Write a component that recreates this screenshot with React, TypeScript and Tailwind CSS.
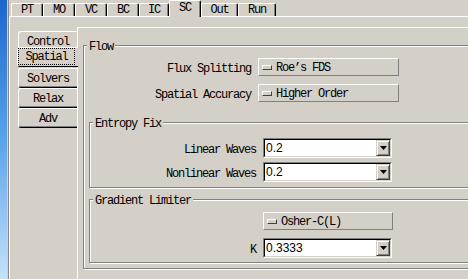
// Solver settings dialog: "SC" page of the case notebook, "Spatial" sub-page.
// Classic Win9x look: #d4d0c8 face, white highlight, #808080 / black shadows.

const mono = "font-['Liberation_Mono',monospace] text-[12px] leading-[12px] tracking-[-1.2px] text-black";
const sans = "font-['Liberation_Sans',sans-serif] text-[12px] leading-[12px] text-black";

type TopTab = { label: string; width: string; active?: boolean };

const topTabs: TopTab[] = [
  { label: "PT", width: "w-[32px]" },
  { label: "MO", width: "w-[32px]" },
  { label: "VC", width: "w-[32px]" },
  { label: "BC", width: "w-[32px]" },
  { label: "IC", width: "w-[30px]" },
  { label: "SC", width: "w-[32px]", active: true },
  { label: "Out", width: "w-[37px]" },
  { label: "Run", width: "w-[38px]" },
];

const sideTabs = ["Control", "Spatial", "Solvers", "Relax", "Adv"];

function TopTabButton({ tab }: { tab: TopTab }) {
  if (tab.active) {
    return (
      <div
        className={`${tab.width} relative z-10 -mb-px flex h-[17px] shrink-0 justify-center rounded-t-[2px] border-l border-r border-t border-l-white border-r-black border-t-white bg-[#d4d0c8] pt-px shadow-[inset_-1px_0_0_#808080] ${mono}`}
      >
        {tab.label}
      </div>
    );
  }
  return (
    <div
      className={`${tab.width} flex h-[13px] shrink-0 items-center justify-center rounded-t-[2px] border-l border-r border-t border-l-white border-r-black border-t-white shadow-[inset_-1px_0_0_#808080] ${mono}`}
    >
      {tab.label}
    </div>
  );
}

function SideTab({ label, active, extra }: { label: string; active: boolean; extra: string }) {
  if (active) {
    return (
      <div
        className={`relative z-10 -ml-px flex h-[20px] w-[61px] shrink-0 rounded-l-[3px] border-b border-l border-t border-b-black border-l-white border-t-white bg-[#d4d0c8] ${extra}`}
      >
        <div className={`flex h-[17px] w-[57px] items-center justify-center border border-dotted border-black pt-px ${mono}`}>
          {label}
        </div>
      </div>
    );
  }
  return (
    <div
      className={`flex h-[20px] w-[59px] shrink-0 items-center justify-center rounded-l-[3px] border-b border-l border-t border-b-black border-l-white border-t-white pt-[2px] shadow-[inset_0_-1px_0_#808080] ${mono} ${extra}`}
    >
      {label}
    </div>
  );
}

function GroupBox({ title, className, children }: { title: string; className: string; children: React.ReactNode }) {
  return (
    <div
      className={`relative shrink-0 border border-[#808080] shadow-[inset_1px_1px_0_#fff,1px_1px_0_#fff] ${className}`}
    >
      <span className={`absolute left-[3px] top-[-5px] bg-[#d4d0c8] px-[2px] ${mono}`}>{title}</span>
      {children}
    </div>
  );
}

function MenuButton({ text, width }: { text: string; width: string }) {
  return (
    <div
      className={`${width} flex h-[18px] shrink-0 items-center border border-b-[#808080] border-l-white border-r-[#808080] border-t-white pl-[3px]`}
    >
      <span className="h-[5px] w-[10px] shrink-0 border border-b-[#404040] border-l-white border-r-[#404040] border-t-white bg-[#d4d0c8]" />
      <span className={`ml-[4px] pt-px ${mono}`}>{text}</span>
    </div>
  );
}

function Combo({ value }: { value: string }) {
  return (
    <div className="flex h-[20px] w-[129px] shrink-0 border border-b-white border-l-[#808080] border-r-white border-t-[#808080]">
      <div className="flex flex-1 items-center border border-b-[#d4d0c8] border-l-black border-r-[#d4d0c8] border-t-black bg-white">
        <span className={`flex-1 pl-px ${sans}`}>{value}</span>
        <div className="flex h-full w-[14px] items-center justify-center border border-b-[#404040] border-l-[#d4d0c8] border-r-[#404040] border-t-[#d4d0c8] bg-[#d4d0c8] shadow-[inset_1px_1px_0_#fff,inset_-1px_-1px_0_#808080]">
          <svg width="7" height="4" viewBox="0 0 7 4">
            <polygon points="0,0 7,0 3.5,4" fill="#000" />
          </svg>
        </div>
      </div>
    </div>
  );
}

function Row({ label, labelWidth, children, className = "" }: { label: string; labelWidth: string; children: React.ReactNode; className?: string }) {
  return (
    <div className={`flex items-center gap-[7px] ${className}`}>
      <span className={`${labelWidth} shrink-0 pt-[4px] text-right ${mono}`}>{label}</span>
      {children}
    </div>
  );
}

export default function App() {
  return (
    <div className="flex h-[279px] w-[468px] overflow-hidden bg-[#d4d0c8]">
      {/* desktop edge peeking out on the left */}
      <div className="w-[7px] shrink-0 bg-gradient-to-b from-[#1a66cc] via-[#5aa2ea] to-[#c4e2fa]" />
      <div className="w-px shrink-0 bg-[#d4d0c8]" />
      <div className="w-px shrink-0 bg-[#8c8c8c]" />

      <div className="flex min-w-0 flex-1 flex-col">
        <div className="flex h-[16px] shrink-0 items-end pl-[2px]">
          {topTabs.map((t) => (
            <TopTabButton key={t.label} tab={t} />
          ))}
        </div>

        <div className="flex flex-1 border-l border-t border-white pl-[8px] pt-[10px]">
          <div className="flex w-[59px] shrink-0 flex-col pt-[4px]">
            {sideTabs.map((label, i) => (
              <SideTab
                key={label}
                label={label}
                active={label === "Spatial"}
                extra={i === 1 ? "-mt-[4px]" : i === 2 ? "mt-px" : ""}
              />
            ))}
          </div>

          <div className="flex-1 border-l border-t border-white pl-[5px] pt-[17px]">
            <GroupBox title="Flow" className="w-[400px] pb-[5px] pt-[12px]">
              <Row label="Flux Splitting" labelWidth="w-[167px]">
                <MenuButton text="Roe’s FDS" width="w-[141px]" />
              </Row>
              <Row label="Spatial Accuracy" labelWidth="w-[167px]" className="mt-[8px]">
                <MenuButton text="Higher Order" width="w-[141px]" />
              </Row>

              <GroupBox title="Entropy Fix" className="ml-[5px] mt-[20px] w-[390px] pb-[5px] pt-[15px]">
                <Row label="Linear Waves" labelWidth="w-[166px]">
                  <Combo value="0.2" />
                </Row>
                <Row label="Nonlinear Waves" labelWidth="w-[166px]" className="mt-[4px]">
                  <Combo value="0.2" />
                </Row>
              </GroupBox>

              <GroupBox title="Gradient Limiter" className="ml-[5px] mt-[11px] w-[390px] pb-[4px] pt-[12px]">
                <Row label="" labelWidth="w-[166px]">
                  <MenuButton text="Osher-C(L)" width="w-[130px]" />
                </Row>
                <Row label="K" labelWidth="w-[166px]" className="mt-[8px]">
                  <Combo value="0.3333" />
                </Row>
              </GroupBox>
            </GroupBox>
          </div>
        </div>
      </div>
    </div>
  );
}
